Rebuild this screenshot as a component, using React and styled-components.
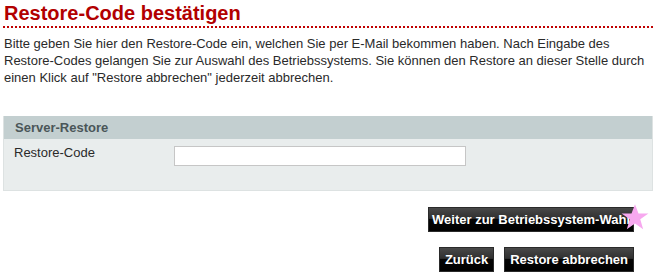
import React from "react";
import styled, { createGlobalStyle } from "styled-components";

const GlobalStyle = createGlobalStyle`
  body {
    margin: 0;
    background: #fff;
    font-family: "Liberation Sans", Arial, sans-serif;
  }
`;

function App() {
  return (
    <>
      <GlobalStyle />
      <Page>
        <Title>Restore-Code bestätigen</Title>
        <Intro>
          Bitte geben Sie hier den Restore-Code ein, welchen Sie per E-Mail bekommen haben. Nach Eingabe des
          Restore-Codes gelangen Sie zur Auswahl des Betriebssystems. Sie können den Restore an dieser Stelle durch
          einen Klick auf "Restore abbrechen" jederzeit abbrechen.
        </Intro>
        <Panel>
          <PanelHead>Server-Restore</PanelHead>
          <PanelBody>
            <Row>
              <Label>Restore-Code</Label>
              <CodeInput type="text" />
            </Row>
          </PanelBody>
        </Panel>
        <Actions>
          <ButtonRow>
            <StarWrap>
              <DarkButton $pad={3}>Weiter zur Betriebssystem-Wahl</DarkButton>
              <Star viewBox="0 0 24 24">
                <polygon points="12,1 15,9 23.5,9 16.5,14 19,22.5 12,17.5 5,22.5 7.5,14 0.5,9 9,9" />
              </Star>
            </StarWrap>
          </ButtonRow>
          <ButtonRow>
            <DarkButton>Zurück</DarkButton>
            <DarkButton>Restore abbrechen</DarkButton>
          </ButtonRow>
        </Actions>
      </Page>
    </>
  );
}

export default App;

const Page = styled.div`
  width: 650px;
  padding: 2px 4px 0 3px;
`;

const Title = styled.h1`
  margin: 0;
  padding: 0 0 2px 1px;
  font-size: 20px;
  line-height: 22px;
  font-weight: bold;
  color: #b20000;
  border-bottom: 2px dotted #c00000;
`;

const Intro = styled.p`
  margin: 7px 0 0 1px;
  font-size: 13px;
  line-height: 17px;
  color: #2a2a2a;
  width: 649px;
`;

const Panel = styled.div`
  margin-top: 30px;
  border: 1px solid #dde2e2;
  border-top: none;
`;

const PanelHead = styled.div`
  background: #c3cfd0;
  height: 23px;
  line-height: 23px;
  padding-left: 11px;
  font-size: 13px;
  font-weight: bold;
  color: #4a5658;
`;

const PanelBody = styled.div`
  background: #e9eded;
  height: 51px;
  padding: 6px 0 0 10px;
  box-sizing: border-box;
`;

const Row = styled.div`
  display: flex;
  align-items: flex-start;
`;

const Label = styled.span`
  width: 160px;
  font-size: 13px;
  color: #2a2a2a;
  line-height: 16px;
`;

const CodeInput = styled.input`
  width: 292px;
  height: 20px;
  box-sizing: border-box;
  border: 1px solid #c6c6c6;
  background: #fff;
  margin: 1px 0 0;
  padding: 0 3px;
`;

const Actions = styled.div`
  display: flex;
  flex-direction: column;
  align-items: flex-end;
  gap: 15px;
  padding-right: 19px;
  margin-top: 16px;
`;

const ButtonRow = styled.div`
  display: flex;
  gap: 10px;
`;

const StarWrap = styled.div`
  position: relative;
`;

const DarkButton = styled.button`
  height: 25px;
  padding: 0 ${(p) => p.$pad ?? 5}px;
  border: 1px solid #2a2a2a;
  background: linear-gradient(to bottom, #484848 0%, #303030 45%, #050505 50%, #000 100%);
  color: #fff;
  font-family: "Liberation Sans", Arial, sans-serif;
  font-size: 13px;
  font-weight: bold;
  cursor: pointer;
`;

const Star = styled.svg`
  position: absolute;
  right: -15px;
  top: -4px;
  width: 28px;
  height: 28px;
  fill: #f7a8ef;
`;
